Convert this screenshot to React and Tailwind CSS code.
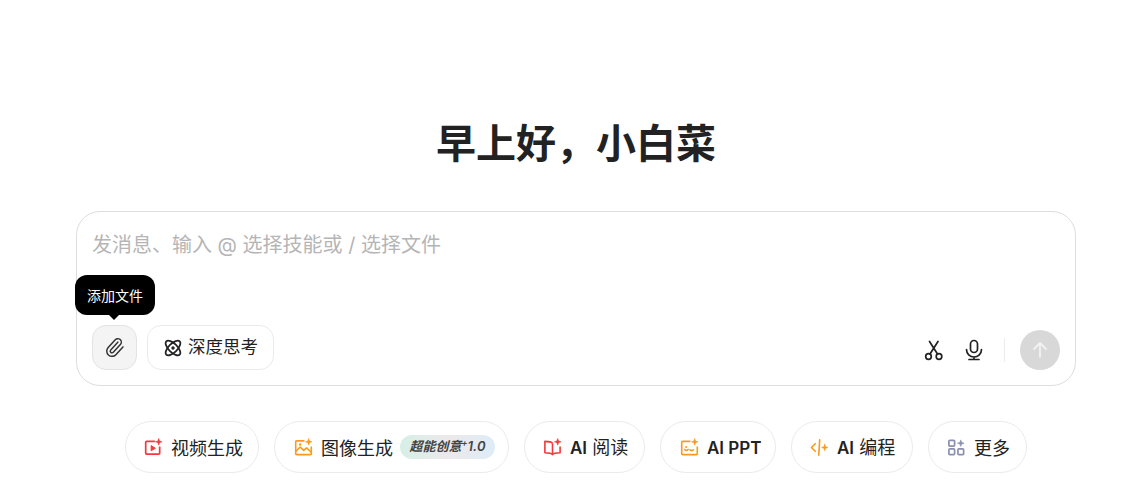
import React from "react";
import { Paperclip } from "lucide-react";

const cjk = "font-['Inter','Noto_Sans_CJK_SC',sans-serif]";

const Spark = ({ color, x = 15.5, y = 4 }) => (
  <path
    d={`M${x} ${y - 3.5}l.9 2.600 2.600.9-2.600.9-.9 2.600-.9-2.600-2.600-.9 2.600-.9z`}
    fill={color}
    stroke={color}
    strokeWidth="0.6"
  />
);

const VideoIcon = () => (
  <svg width="19" height="19" viewBox="0 0 20 20" fill="none" stroke="#f5383b" strokeWidth="1.8" strokeLinejoin="round">
    <path d="M11.500 3.500H2.800a1 1 0 0 0-1 1V16a1 1 0 0 0 1 1h12.700a1 1 0 0 0 1-1V9" />
    <path d="M7.500 8v5.500l4.500-2.700z" fill="#f5383b" strokeWidth="1" />
    <Spark color="#f5383b" />
  </svg>
);

const ImageIcon = () => (
  <svg width="19" height="19" viewBox="0 0 20 20" fill="none" stroke="#fa9a1c" strokeWidth="1.7" strokeLinejoin="round">
    <path d="M11 3H2.800a1 1 0 0 0-1 1v12.500a1 1 0 0 0 1 1h14.400a1 1 0 0 0 1-1V9" />
    <path d="M1.800 14l4.700-4.500 3.700 3.500 3-2.500 5 4.500" />
    <circle cx="6.500" cy="6.800" r="1.300" fill="#fa9a1c" stroke="none" />
    <Spark color="#fa9a1c" />
  </svg>
);

const BookIcon = () => (
  <svg width="19" height="19" viewBox="0 0 20 20" fill="none" stroke="#f5383b" strokeWidth="1.7" strokeLinejoin="round">
    <path d="M10 5.500C9 4 6.500 3.500 2 3.500V15.500c4 0 7 .5 8 2 1-1.500 4-2 8-2V9" />
    <path d="M10 5.500V17.500" />
    <Spark color="#f5383b" />
  </svg>
);

const PptIcon = () => (
  <svg width="19" height="19" viewBox="0 0 20 20" fill="none" stroke="#fa9a1c" strokeWidth="1.700" strokeLinejoin="round">
    <path d="M11 3.500H2.800a1 1 0 0 0-1 1V16.500a1 1 0 0 0 1 1h14.400a1 1 0 0 0 1-1V9" />
    <path d="M5 12c1 1.300 2.500 1.300 3.500 0M10.500 12.500c1 1 2.500 1 3.500 0" strokeLinecap="round" />
    <circle cx="6.500" cy="9.500" r="1.100" fill="#fa9a1c" stroke="none" />
    <Spark color="#fa9a1c" />
  </svg>
);

const CodeIcon = () => (
  <svg width="19" height="19" viewBox="0 0 20 20" fill="none" stroke="#fa9a1c" strokeWidth="1.700" strokeLinecap="round" strokeLinejoin="round">
    <path d="M5.500 6L1.500 10l4 4" />
    <path d="M10.200 2l-1 16" />
    <Spark color="#fa9a1c" x={15.5} y={10} />
  </svg>
);

const MoreIcon = () => (
  <svg width="19" height="19" viewBox="0 0 20 20" fill="none" stroke="#8b8fb0" strokeWidth="1.800" strokeLinejoin="round">
    <rect x="2" y="2.500" width="6" height="6" rx="1" />
    <rect x="2" y="11.500" width="6" height="6" rx="1" />
    <rect x="11.500" y="11.500" width="6" height="6" rx="1" />
    <Spark color="#8b8fb0" x={14.5} y={5.5} />
  </svg>
);

const AtomIcon = () => (
  <svg width="20" height="20" viewBox="0 0 20 20" fill="none" stroke="#222" strokeWidth="1.700">
    <ellipse cx="10" cy="10" rx="4.300" ry="9.500" transform="rotate(45 10 10)" />
    <ellipse cx="10" cy="10" rx="4.300" ry="9.500" transform="rotate(-45 10 10)" />
    <circle cx="10" cy="10" r="1.700" fill="#222" stroke="none" />
  </svg>
);

const ScissorsIcon = () => (
  <svg width="22" height="22" viewBox="0 0 22 22" fill="none" stroke="#222" strokeWidth="1.700" strokeLinecap="round">
    <circle cx="6.500" cy="17.500" r="2.800" />
    <circle cx="17" cy="17.500" r="2.800" />
    <path d="M8 15L16 2.500M15.500 15L7.500 2.500" />
  </svg>
);

const MicIcon = () => (
  <svg width="22" height="22" viewBox="0 0 22 22" fill="none" stroke="#222" strokeWidth="1.700" strokeLinecap="round">
    <rect x="7.500" y="1.500" width="7" height="12" rx="3.500" />
    <path d="M3.500 10.500a7.500 7.500 0 0 0 15 0M11 18v2.500M6 20.500h10" />
  </svg>
);

const ArrowUp = () => (
  <svg width="20" height="20" viewBox="0 0 20 20" fill="none" stroke="#f2f2f2" strokeWidth="1.800" strokeLinecap="round" strokeLinejoin="round">
    <path d="M10 17V3M4 9l6-6 6 6" />
  </svg>
);

function Pill({ icon, children, extra, className }) {
  return (
    <div className={`flex h-[52px] items-center rounded-full border border-[#ebebeb] bg-white ${className}`}>
      {icon}
      <span className="ml-[8px] pt-[2px] text-[18px] text-[#222]">{children}</span>
      {extra}
    </div>
  );
}

export default function App() {
  return (
    <div className={`flex h-[494px] w-full flex-col items-center overflow-hidden bg-white pl-[10px] pt-[118px] ${cjk}`}>
      <h1 className="text-[40px] font-bold leading-[52px] text-[#222]">早上好，小白菜</h1>

      <div className="relative mt-[41px] flex h-[175px] w-[1000px] flex-col justify-between rounded-[24px] border border-[#dedede] bg-white pb-[15px] pl-[15px] pr-[15px] pt-[18px]">
        <div className="text-[20px] leading-[30px] text-[#b5b5b5]">发消息、输入 @ 选择技能或 / 选择文件</div>

        <div className="flex items-end justify-between">
          <div className="flex items-center gap-[10px]">
            <div className="relative">
              <div className="absolute bottom-[55px] left-[-17px] flex h-10 w-20 items-center justify-center rounded-xl bg-black text-[14px] text-white">
                添加文件
                <div className="absolute bottom-[-5px] left-[33px] size-0 border-x-[6px] border-t-[6px] border-x-transparent border-t-black" />
              </div>
              <button className="flex size-[45px] items-center justify-center rounded-[14px] border border-[#e3e3e3] bg-[#f4f4f4]">
                <Paperclip size={21} strokeWidth={1.7} color="#333" className="rotate-[-2deg]" />
              </button>
            </div>
            <button className="flex h-[45px] w-[127px] items-center gap-[5px] rounded-[14px] border border-[#ebebeb] bg-white pl-[15px] text-[17.5px] text-[#222]">
              <AtomIcon />
              深度思考
            </button>
          </div>

          <div className="flex items-center">
            <ScissorsIcon />
            <div className="ml-[19px]"><MicIcon /></div>
            <div className="ml-[19px] h-6 w-px bg-[#ececec]" />
            <button className="ml-[15px] flex size-10 items-center justify-center rounded-full bg-[#d8d8d8]">
              <ArrowUp />
            </button>
          </div>
        </div>
      </div>

      <div className="mt-[35px] flex items-center gap-[15px]">
        <Pill icon={<VideoIcon />} className="w-[134px] pl-[18px]">视频生成</Pill>
        <Pill
          icon={<ImageIcon />}
          className="w-[235px] pl-[19px]"
          extra={
            <span className="ml-[7px] flex h-[24px] w-[95px] items-center justify-center rounded-full bg-gradient-to-r from-[#d6efe6] via-[#ece9ea] to-[#deecf7] text-[13px] font-semibold italic text-[#444]">
              超能创意<sup className="text-[9px]">+</sup>1.0
            </span>
          }
        >
          图像生成
        </Pill>
        <Pill icon={<BookIcon />} className="w-[121px] pl-[18px]"><b className="text-[17px] font-semibold">AI</b> 阅读</Pill>
        <Pill icon={<PptIcon />} className="w-[116px] pl-[19px]"><b className="text-[17px] font-semibold">AI PPT</b></Pill>
        <Pill icon={<CodeIcon />} className="w-[122px] pl-[18px]"><b className="text-[17px] font-semibold">AI</b> 编程</Pill>
        <Pill icon={<MoreIcon />} className="w-[99px] pl-[18px]">更多</Pill>
      </div>
    </div>
  );
}
